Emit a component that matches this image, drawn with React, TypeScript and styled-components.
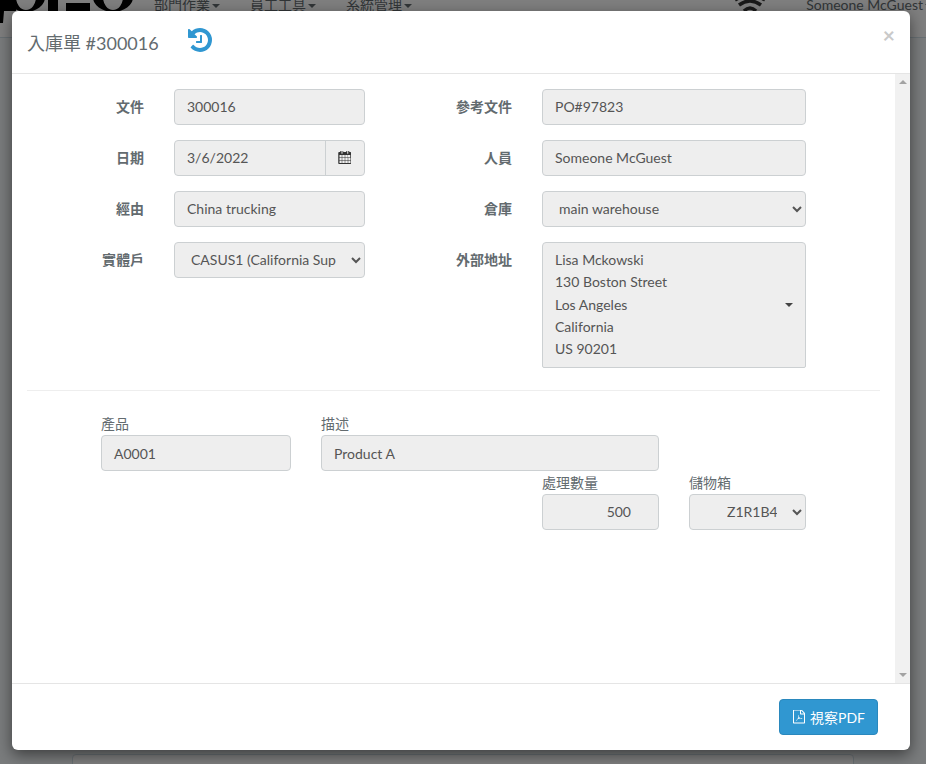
import React from "react";
import styled, { createGlobalStyle } from "styled-components";

const FONT = `Lato, "Noto Sans CJK JP", sans-serif`;

const Global = createGlobalStyle`
  html, body { margin: 0; padding: 0; height: 100%; overflow: hidden; background: #f5f8fa; }
  * { box-sizing: border-box; }
  body { font-family: ${FONT}; font-size: 14px; color: #636b6f; }
`;

const Page = styled.div`
  position: relative;
  width: 926px;
  height: 764px;
  overflow: hidden;
  background: #f5f8fa;
`;

const NavBar = styled.header`
  height: 38px;
  border-bottom: 1px solid #d3e0e9;
  display: flex;
  align-items: flex-start;
  background: #fff;
`;

const Logo = styled.svg`
  width: 134px;
  height: 26px;
  margin-right: 20px;
  flex: none;
`;

const NavItem = styled.span`
  font-size: 14px;
  line-height: 14px;
  margin-top: -2px;
  margin-right: 30px;
  color: #636b6f;
  white-space: nowrap;
  &::after {
    content: "";
    display: inline-block;
    margin-left: 2px;
    vertical-align: middle;
    border-top: 4px solid #636b6f;
    border-left: 4px solid transparent;
    border-right: 4px solid transparent;
  }
`;

const NavRight = styled.div`
  margin-left: auto;
  display: flex;
  align-items: flex-start;
  gap: 40px;
`;

const NavUser = styled(NavItem)`
  margin-right: -7px;
`;

const BackPanel = styled.div`
  width: 782px;
  height: 60px;
  margin: 716px 0 0 72px;
  border: 1px solid #d3e0e9;
  border-radius: 4px;
  background: #fff;
`;

const Backdrop = styled.div`
  position: absolute;
  inset: 0;
  background: rgba(0, 0, 0, 0.5);
`;

const Modal = styled.section`
  position: absolute;
  left: 12px;
  top: 11px;
  width: 898px;
  height: 739px;
  background: #fff;
  border-radius: 6px;
  box-shadow: 0 5px 15px rgba(0, 0, 0, 0.5);
  display: flex;
  flex-direction: column;
  overflow: hidden;
`;

const ModalHeader = styled.div`
  height: 63px;
  flex: none;
  border-bottom: 1px solid #e5e5e5;
  display: flex;
  align-items: flex-start;
  padding: 0 15px;
`;

const Title = styled.h4`
  margin: 20px 0 0 0;
  font-size: 18px;
  line-height: 24px;
  font-weight: 400;
  color: #636b6f;
`;

const HistoryIcon = styled.svg`
  width: 24px;
  height: 24px;
  margin: 17px 0 0 29px;
  fill: #3097d1;
`;

const Close = styled.span`
  margin: 12px 0 0 auto;
  font-size: 21px;
  line-height: 23px;
  font-weight: 700;
  color: #c9c9c9;
`;

const BodyRow = styled.div`
  flex: 1;
  min-height: 0;
  display: flex;
`;

const Body = styled.div`
  flex: 1;
  padding: 15px 15px 0;
`;

const Scrollbar = styled.div`
  width: 15px;
  flex: none;
  background: #f1f1f1;
  display: flex;
  flex-direction: column;
  justify-content: space-between;
  align-items: center;
  padding: 6px 0;
`;

const ArrowUp = styled.i`
  display: block;
  border-bottom: 4px solid #a3a3a3;
  border-left: 4px solid transparent;
  border-right: 4px solid transparent;
`;

const ArrowDown = styled.i`
  display: block;
  border-top: 4px solid #a3a3a3;
  border-left: 4px solid transparent;
  border-right: 4px solid transparent;
`;

const FormGrid = styled.div`
  display: grid;
  grid-template-columns: 117px 191px 117px 264px;
  column-gap: 30px;
  row-gap: 15px;
  justify-content: start;
`;

const SideLabel = styled.label`
  font-weight: 700;
  font-size: 14px;
  line-height: 20px;
  padding-top: 8px;
  text-align: right;
  color: #636b6f;
`;

const controlBase = `
  height: 36px;
  background: #eee;
  border: 1px solid #ccd0d2;
  border-radius: 4px;
  font-family: ${FONT};
  font-size: 14px;
  color: #555;
`;

const Field = styled.div<{ $right?: boolean }>`
  ${controlBase}
  padding: 0 ${(p) => (p.$right ? "27px" : "12px")} 0 12px;
  line-height: 33px;
  text-align: ${(p) => (p.$right ? "right" : "left")};
  white-space: nowrap;
  overflow: hidden;
`;

const LineField = styled(Field)`
  line-height: 35px;
`;

const DateGroup = styled.div`
  ${controlBase}
  display: flex;
  line-height: 33px;
`;

const DateText = styled.span`
  flex: 1;
  padding: 0 12px;
`;

const DateAddon = styled.span`
  width: 39px;
  border-left: 1px solid #ccd0d2;
  display: flex;
  align-items: center;
  justify-content: center;
  padding-right: 1px;
  color: #333;
`;

const CalendarIcon = styled.svg`
  width: 13px;
  height: 14px;
  fill: currentColor;
`;

const Select = styled.select<{ $inset?: number }>`
  ${controlBase}
  width: 100%;
  padding: 0 12px 1px ${(p) => p.$inset ?? 12}px;
  opacity: 1;
`;

const AddressBox = styled.div`
  position: relative;
  height: 126px;
  background: #eee;
  border: 1px solid #ccd0d2;
  border-radius: 4px 4px 2px 2px;
  padding: 6px 12px 0;
  font-size: 14px;
  line-height: 22.3px;
  color: #555;
`;

const Caret = styled.i`
  position: absolute;
  right: 12px;
  top: 60px;
  border-top: 4px solid #444;
  border-left: 4px solid transparent;
  border-right: 4px solid transparent;
`;

const Divider = styled.hr`
  border: 0;
  border-top: 1px solid #eee;
  margin: 22px 0 0;
`;

const LineGrid = styled.div`
  display: grid;
  grid-template-columns: 190px 191px 117px 117px;
  column-gap: 30px;
  row-gap: 2px;
  margin: 23px 0 0 74px;
  justify-content: start;
`;

const Cell = styled.div<{ $col: string }>`
  grid-column: ${(p) => p.$col};
`;

const TopLabel = styled.label`
  display: block;
  font-size: 14px;
  line-height: 20px;
  color: #636b6f;
  margin-bottom: 1px;
`;

const Footer = styled.div`
  height: 67px;
  flex: none;
  border-top: 1px solid #e5e5e5;
  padding: 15px 32px 0 0;
  display: flex;
  justify-content: flex-end;
  align-items: flex-start;
`;

const PdfButton = styled.button`
  height: 36px;
  width: 99px;
  background: #3097d1;
  border: 1px solid #2a88bd;
  border-radius: 4px;
  color: #fff;
  font-family: ${FONT};
  font-size: 14px;
  display: flex;
  align-items: center;
  justify-content: center;
  gap: 5px;
  padding: 0;
`;

const PdfIcon = styled.svg`
  width: 13px;
  height: 14px;
  fill: currentColor;
`;

export default function App() {
  return (
    <Page>
      <Global />
      <NavBar>
        <Logo viewBox="0 0 134 26" aria-hidden="true">
          <path d="M0 0h16v11H4l-1 12H0z" fill="#000" />
          <path fillRule="evenodd" d="M7 -3a19 15 0 1 0 38 0a19 15 0 1 0 -38 0zM16 -3a10 13 0 1 0 20 0a10 13 0 1 0 -20 0z" fill="#000" />
          <rect x="48" y="0" width="10" height="13" fill="#000" />
          <rect x="66" y="3" width="24" height="9" fill="#000" />
          <path fillRule="evenodd" d="M93 -3a20 15 0 1 0 40 0a20 15 0 1 0 -40 0zM103 -3a10 13 0 1 0 20 0a10 13 0 1 0 -20 0z" fill="#000" />
        </Logo>
        <NavItem>部門作業</NavItem>
        <NavItem>員工工具</NavItem>
        <NavItem>系統管理</NavItem>
        <NavRight>
          <svg width="32" height="12" viewBox="0 0 32 12" aria-hidden="true">
            <g fill="none" stroke="#333" strokeWidth="3.5">
              <path d="M1 0Q16 -9 31 0" />
              <path d="M5 5Q16 -3 27 5" />
              <path d="M10 11Q16 5 22 11" />
            </g>
          </svg>
          <NavUser>Someone McGuest</NavUser>
        </NavRight>
      </NavBar>
      <BackPanel />
      <Backdrop />
      <Modal>
        <ModalHeader>
          <Title>入庫單 #300016</Title>
          <HistoryIcon viewBox="0 128 1536 1536" aria-hidden="true">
            <path d="M1536 896q0 156-61 298t-164 245-245 164-298 61q-172 0-327-72.5t-264-204.5q-7-10-6.5-22.5t8.5-20.5l137-138q10-9 25-9 16 2 23 12 73 95 179 147t225 52q104 0 198.5-40.5t163.5-109.5 109.5-163.5 40.5-198.5-40.5-198.5-109.5-163.5-163.5-109.5-198.5-40.5q-98 0-188 35.5t-160 101.5l137 138q31 30 14 69-17 40-59 40h-448q-26 0-45-19t-19-45v-448q0-42 40-59 39-17 69 14l130 129q107-101 244.5-156.5t284.5-55.5q156 0 298 61t245 164 164 245 61 298zm-640-288v448q0 14-9 23t-23 9h-320q-14 0-23-9t-9-23v-64q0-14 9-23t23-9h224v-352q0-14 9-23t23-9h64q14 0 23 9t9 23z" />
          </HistoryIcon>
          <Close>×</Close>
        </ModalHeader>
        <BodyRow>
          <Body>
            <FormGrid>
              <SideLabel>文件</SideLabel>
              <Field>300016</Field>
              <SideLabel>參考文件</SideLabel>
              <Field>PO#97823</Field>
              <SideLabel>日期</SideLabel>
              <DateGroup>
                <DateText>3/6/2022</DateText>
                <DateAddon>
                  <CalendarIcon viewBox="0 128 1664 1792" aria-hidden="true">
                    <path d="M192 1664h288v-288h-288v288zm352 0h320v-288h-320v288zm-352-352h288v-320h-288v320zm352 0h320v-320h-320v320zm-352-384h288v-288h-288v288zm736 736h320v-288h-320v288zm-384-736h320v-288h-320v288zm768 736h288v-288h-288v288zm-384-352h320v-320h-320v320zm-352-864v-288q0-13-9.5-22.5t-22.5-9.5h-64q-13 0-22.5 9.5t-9.5 22.5v288q0 13 9.5 22.5t22.5 9.5h64q13 0 22.5-9.5t9.5-22.5zm736 864h288v-320h-288v320zm-384-384h320v-288h-320v288zm352 0h288v-288h-288v288zm32-480v-288q0-13-9.5-22.5t-22.5-9.5h-64q-13 0-22.5 9.5t-9.5 22.5v288q0 13 9.5 22.5t22.5 9.5h64q13 0 22.5-9.5t9.5-22.5zm384-64v1280q0 52-38 90t-90 38h-1408q-52 0-90-38t-38-90v-1280q0-52 38-90t90-38h128v-96q0-66 47-113t113-47h64q66 0 113 47t47 113v96h384v-96q0-66 47-113t113-47h64q66 0 113 47t47 113v96h128q52 0 90 38t38 90z" />
                  </CalendarIcon>
                </DateAddon>
              </DateGroup>
              <SideLabel>人員</SideLabel>
              <Field>Someone McGuest</Field>
              <SideLabel>經由</SideLabel>
              <Field>China trucking</Field>
              <SideLabel>倉庫</SideLabel>
              <Select defaultValue="main warehouse">
                <option>main warehouse</option>
              </Select>
              <SideLabel>實體戶</SideLabel>
              <Select defaultValue="c">
                <option value="c">CASUS1 (California Supply)</option>
              </Select>
              <SideLabel>外部地址</SideLabel>
              <AddressBox>
                Lisa Mckowski<br />
                130 Boston Street<br />
                Los Angeles<br />
                California<br />
                US 90201
                <Caret />
              </AddressBox>
            </FormGrid>
            <Divider />
            <LineGrid>
              <Cell $col="1">
                <TopLabel>產品</TopLabel>
                <LineField>A0001</LineField>
              </Cell>
              <Cell $col="2 / 4">
                <TopLabel>描述</TopLabel>
                <LineField>Product A</LineField>
              </Cell>
              <Cell $col="3">
                <TopLabel>處理數量</TopLabel>
                <Field $right>500</Field>
              </Cell>
              <Cell $col="4">
                <TopLabel>儲物箱</TopLabel>
                <Select $inset={33} defaultValue="z">
                  <option value="z">Z1R1B4</option>
                </Select>
              </Cell>
            </LineGrid>
          </Body>
          <Scrollbar>
            <ArrowUp />
            <ArrowDown />
          </Scrollbar>
        </BodyRow>
        <Footer>
          <PdfButton>
            <PdfIcon viewBox="0 128 1664 1664" aria-hidden="true">
              <path d="M1596 380q28 28 48 76t20 88v1152q0 40-28 68t-68 28h-1344q-40 0-68-28t-28-68v-1600q0-40 28-68t68-28h896q40 0 88 20t76 48zm-444-244v376h376q-10-29-22-41l-313-313q-12-12-41-22zm384 1528v-1024h-416q-40 0-68-28t-28-68v-416h-768v1536h1280zm-514-593q25 20 64 42 46-5 92-5 116 0 140 39 12 18 1 40 0 1-1 2l-2 2v1q-5 30-56 30-38 0-91-16t-103-42q-172 19-305 65-119 204-188 204-12 0-21-6l-16-8q-2-1-4-4-6-6-4-20 6-28 39-64t92-67q10-6 16 4 1 1 2 4 36-59 74-137 47-94 72-181-17-57-21.5-111t4.5-89q8-28 30-28h16q17 0 26 11 13 15 7 48-2 5-3 8 0 3 1 7v14q-1 47-8 78 27 81 71 132z" />
            </PdfIcon>
            視察PDF
          </PdfButton>
        </Footer>
      </Modal>
    </Page>
  );
}
